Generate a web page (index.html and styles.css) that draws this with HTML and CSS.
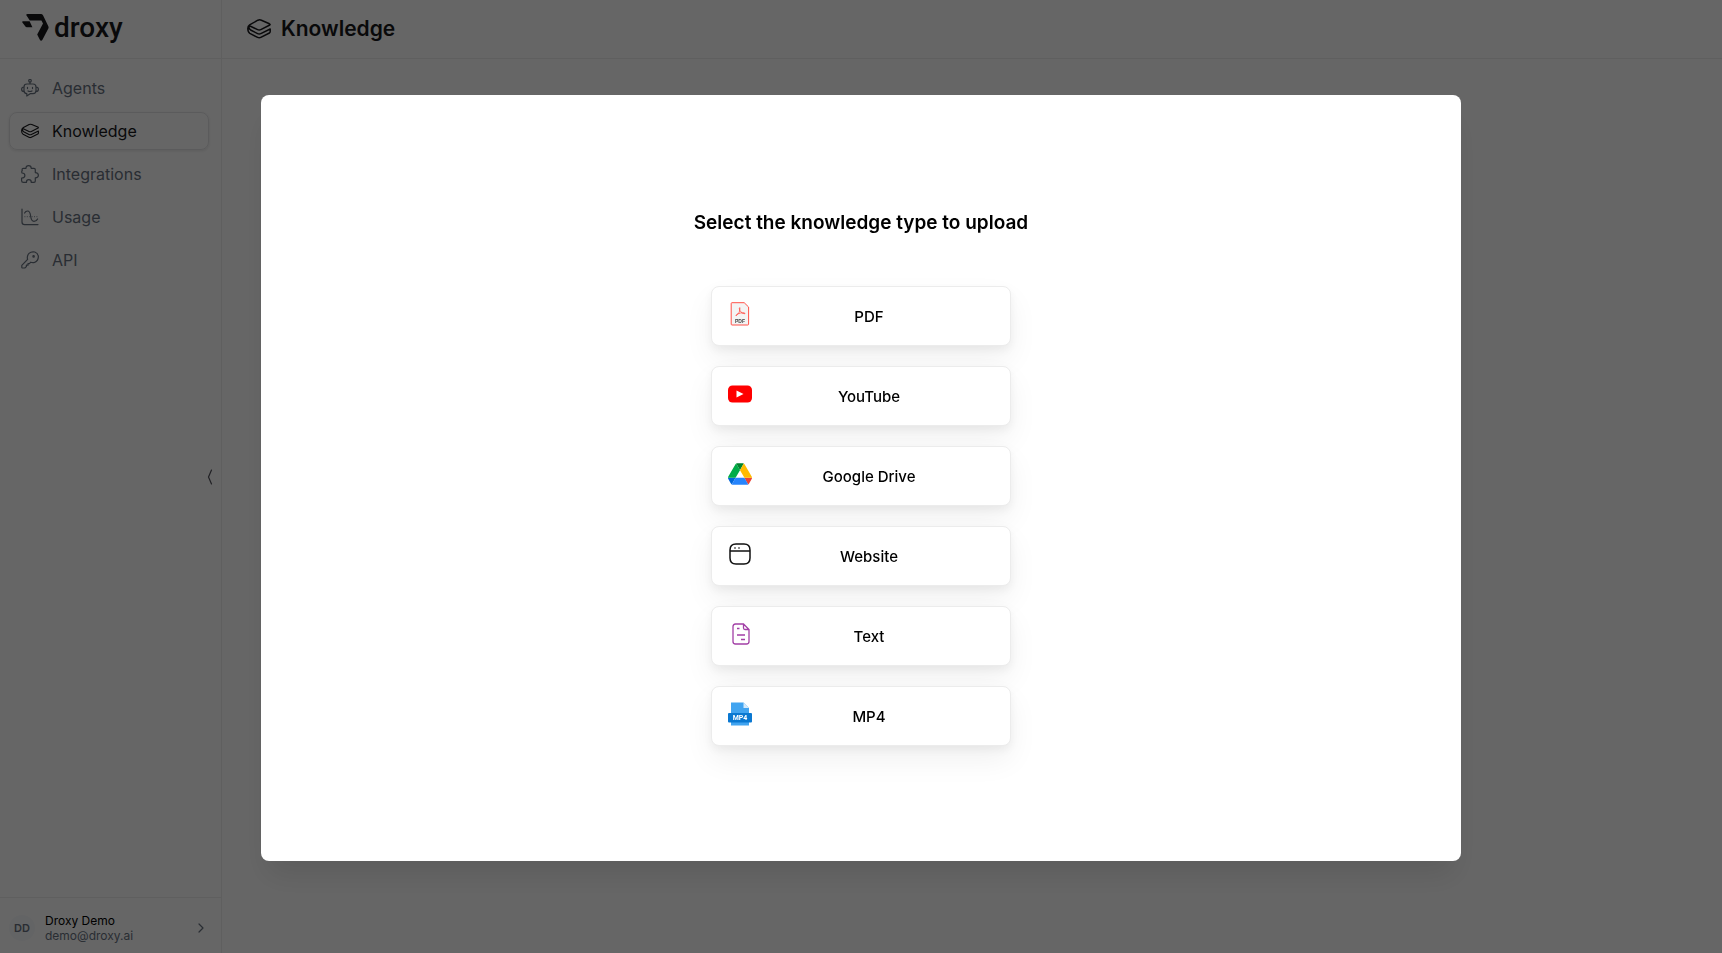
FILE: index.html
```html
<!DOCTYPE html>
<html lang="en">
<head>
  <meta charset="UTF-8" />
  <meta name="viewport" content="width=device-width, initial-scale=1.0" />
  <title>Droxy - Knowledge</title>
  <link rel="stylesheet" href="styles.css">
</head>
<body>

  <!-- shared icon -->
  <svg class="sprite" aria-hidden="true">
    <symbol id="icon-layers" viewBox="0 0 24 20">
      <path d="M22.8 6 Q23.6 5.4 22.4 4.8 L14.4 1.2 Q12.6 .5 10.9 1.2 L2.6 5.8 Q.8 7 .8 9.6 Q.8 13.2 2.8 14.4 L10.6 18.4 Q12.2 19.2 13.8 18.4 L22.4 14 Q23.2 13.6 23.2 12.6 V10 L13.8 14.6 Q12.2 15.4 10.6 14.6 L3.6 11 Q1 9.2 2.4 6.8 L10.6 10.6 Q12.2 11.4 13.8 10.6 Z"/>
    </symbol>
  </svg>

  <div class="app">
    <aside class="sidebar">
      <a class="logo" href="#">
        <svg class="logo-mark" viewBox="0 0 27 27" aria-hidden="true">
          <path d="M5.5 0 H19 Q20.2 0 21 1.3 L26.2 12 Q27 13.4 26.2 14.8 L20.6 25.6 Q19 28 17.7 25.6 L15.2 20.5 L21 9.4 L19.4 6.4 H7.8 L4.2 .9 Q4.3 0 5.5 0 Z"/>
          <path d="M1 7.2 H7.6 L10.4 13.2 H5 Q3.8 13.2 3.2 12.2 L.2 8.2 Q0 7.2 1 7.2 Z"/>
        </svg>
        <span>droxy</span>
      </a>

      <nav class="nav">
        <a class="nav-item" href="#">
          <svg class="icon" viewBox="0 0 18 18" aria-hidden="true">
            <circle cx="9" cy="1.8" r="1.3"/>
            <path d="M9 3.2 V5 M6 5 H12 Q15 5 15 8 V11.5 Q15 14.6 12 14.6 H9.5 L5.8 17 V14.6 Q3 14.4 3 11.5 V8 Q3 5 6 5 Z M3 8 Q.6 8 .6 10.3 Q.6 12.6 3 12.6 M15 8 Q17.4 8 17.4 10.3 Q17.4 12.6 15 12.6 M6.5 8.3 V9.6 M11.5 8.3 V9.6 M7 12 Q9 13 11 12"/>
          </svg>
          Agents
        </a>
        <a class="nav-item active" href="#">
          <svg class="icon" viewBox="0 0 24 20" aria-hidden="true"><use href="#icon-layers"/></svg>
          Knowledge
        </a>
        <a class="nav-item" href="#">
          <svg class="icon" viewBox="0 0 18 18" aria-hidden="true">
            <path d="M1.3 5.2 Q.6 3.3 2.6 3.3 H5 Q5 .6 7.6 .6 Q10.2 .6 10.2 3.3 H13 Q14.3 3.3 14.3 4.8 V7.6 Q17.4 7.8 17.4 10.3 Q17.4 12.8 14.3 12.8 V16 Q14.3 17.4 13 17.4 H10.3 Q10.3 14.7 7.8 14.7 Q5.4 14.7 5.4 17.4 H2.4 Q.6 17.4 .6 15.8 V13 Q3.9 13 3.9 10.5 Q3.9 8 1 8 Q.4 6.5 1.3 5.2 Z"/>
          </svg>
          Integrations
        </a>
        <a class="nav-item" href="#">
          <svg class="icon" viewBox="0 0 18 18" aria-hidden="true">
            <path d="M1 1 V14 Q1 16.6 3.6 16.6 H17 M3.6 5 Q4.6 3 6.6 3 Q9 3 9.6 8 Q10.4 13.4 13 13.4 Q15.4 13.4 16.6 11"/>
            <path d="M3.4 8.7 H17" stroke-width=".8" stroke-linecap="butt" stroke-dasharray="1 1.4"/>
          </svg>
          Usage
        </a>
        <a class="nav-item" href="#">
          <svg class="icon" viewBox="0 0 18 18" aria-hidden="true">
            <path d="M6.6 8.4 Q5.6 5 8 2.4 Q10.4 .2 13.8 1 Q17 2.2 17.4 5.6 Q17.2 10 13.6 11.4 Q11.4 11.8 9.8 11.2 L8.4 12.6 H7 V14.2 H5.4 V15.6 L3.8 17 H1.6 Q.8 17 .8 16.2 V14.4 Z"/>
            <circle cx="12.6" cy="5.4" r=".7"/>
          </svg>
          API
        </a>
      </nav>

      <button class="collapse" type="button" aria-label="Collapse sidebar">
        <svg viewBox="0 0 6 16" aria-hidden="true"><path d="M4.5 1 L1.5 8 L4.5 15"/></svg>
      </button>

      <button class="account" type="button">
        <span class="avatar">DD</span>
        <span class="account-text">
          <span class="account-name">Droxy Demo</span>
          <span class="account-email">demo@droxy.ai</span>
        </span>
        <svg class="chevron" viewBox="0 0 6 10" aria-hidden="true"><path d="M1 1 L5 5 L1 9"/></svg>
      </button>
    </aside>

    <main class="main">
      <header class="topbar">
        <svg class="topbar-icon" viewBox="0 0 24 20" aria-hidden="true"><use href="#icon-layers"/></svg>
        <h1>Knowledge</h1>
      </header>
      <div class="canvas"></div>
    </main>
  </div>

  <div class="overlay">
    <div class="modal" role="dialog" aria-modal="true" aria-labelledby="modalTitle">
      <h2 id="modalTitle">Select the knowledge type to upload</h2>

      <div class="type-list">
        <button class="type" type="button">
          <svg class="type-icon" viewBox="0 0 24 24" aria-hidden="true">
            <path d="M4 .7 H16.2 L20.6 5 V22.2 Q20.6 23 19.8 23 H4 Q3.2 23 3.2 22.2 V1.5 Q3.2 .7 4 .7 Z" fill="#f4f4f4" stroke="#ff5148"/>
            <path d="M8 14 Q12.6 10.5 12 5.6 Q10.4 5.4 12 8.6 Q13.6 12 17 11.8 Q17.2 10.2 12.6 11 Q8 12 7.8 13.6" fill="none" stroke="#ff5148" stroke-width=".8"/>
            <text x="12" y="20.6" text-anchor="middle" class="pdf-label">PDF</text>
          </svg>
          <span>PDF</span>
        </button>

        <button class="type" type="button">
          <svg class="type-icon" viewBox="0 0 24 24" aria-hidden="true">
            <rect y="3.5" width="24" height="17" rx="4.5" fill="#f00"/>
            <path d="M8.5 8.5 L15.5 12 L8.5 15.5 Z" fill="#fff"/>
          </svg>
          <span>YouTube</span>
        </button>

        <button class="type" type="button">
          <svg class="type-icon" viewBox="0 0 87.3 78" aria-hidden="true">
            <path d="m6.6 66.85 3.85 6.65c.8 1.4 1.95 2.5 3.3 3.3l13.75-23.8h-27.5c0 1.55.4 3.1 1.2 4.5z" fill="#0066da"/>
            <path d="m43.65 25-13.75-23.8c-1.35.8-2.5 1.9-3.3 3.3l-25.4 44a9.06 9.06 0 0 0-1.2 4.5h27.5z" fill="#00ac47"/>
            <path d="m73.55 76.8c1.35-.8 2.5-1.9 3.3-3.3l1.6-2.75 7.65-13.25c.8-1.4 1.2-2.95 1.2-4.5h-27.5l5.85 11.5z" fill="#ea4335"/>
            <path d="m43.65 25 13.75-23.8c-1.35-.8-2.9-1.2-4.5-1.2h-18.5c-1.6 0-3.15.45-4.5 1.2z" fill="#00832d"/>
            <path d="m59.8 53h-32.3l-13.75 23.8c1.35.8 2.9 1.2 4.5 1.2h50.8c1.6 0 3.15-.45 4.5-1.2z" fill="#2684fc"/>
            <path d="m73.4 26.5-12.7-22c-.8-1.4-1.95-2.5-3.3-3.3l-13.75 23.8 16.15 28h27.45c0-1.55-.4-3.1-1.2-4.5z" fill="#ffba00"/>
          </svg>
          <span>Google Drive</span>
        </button>

        <button class="type" type="button">
          <svg class="type-icon" viewBox="0 0 24 24" aria-hidden="true">
            <path d="M8 2 H16 Q22 2 22 8 V16 Q22 22 16 22 H8 Q2 22 2 16 V8 Q2 2 8 2 Z M2 9 H22" fill="none" stroke="#111" stroke-width="1.5"/>
            <path d="M6.2 6 H7.8 M10.2 6 H11.8" stroke="#444" stroke-width="1.4"/>
          </svg>
          <span>Website</span>
        </button>

        <button class="type" type="button">
          <svg class="type-icon" viewBox="0 0 24 24" aria-hidden="true">
            <path d="M7.5 2 H15.5 L21 7.5 V19.5 Q21 22 18.5 22 H7.5 Q5 22 5 19.5 V4.5 Q5 2 7.5 2 Z M15.5 2 V6 Q15.5 7.5 17 7.5 H21 M9 6.5 H11.5 M9 13 H17 M13 17.5 H17" fill="none" stroke="#a23fa6" stroke-width="1.3"/>
          </svg>
          <span>Text</span>
        </button>

        <button class="type" type="button">
          <svg class="type-icon" viewBox="0 0 24 24" aria-hidden="true">
            <path d="M3 .4 H15.5 L21 6 V23.6 H3 Z" fill="#41a4f0"/>
            <path d="M15.5 .4 L21 6 H15.5 Z" fill="#d3e9fb"/>
            <rect y="11" width="24" height="9.5" rx="1" fill="#0a78d1"/>
            <text x="12" y="18.4" text-anchor="middle" class="mp4-label">MP4</text>
          </svg>
          <span>MP4</span>
        </button>
      </div>
    </div>
  </div>

</body>
</html>
```
FILE: styles.css
```css
:root {
  --text-color: #18181b;
  --muted-color: #68727f;
  --border-color: #eeeeee;
}

* {
  margin: 0;
  padding: 0;
  box-sizing: border-box;
}

body {
  font-family: Inter, sans-serif;
  color: var(--text-color);
  background: #fff;
}

a {
  color: inherit;
  text-decoration: none;
}

button {
  font: inherit;
  color: inherit;
  background: none;
  border: none;
  cursor: pointer;
}

.sprite {
  position: absolute;
  width: 0;
  height: 0;
}

.app {
  display: flex;
  min-height: 100vh;
}

/* Sidebar */
.sidebar {
  position: relative;
  display: flex;
  flex-direction: column;
  width: 222px;
  flex-shrink: 0;
  border-right: 1px solid var(--border-color);
}

.logo {
  display: flex;
  align-items: center;
  gap: 5px;
  height: 59px;
  padding: 0 0 3px 22px;
  border-bottom: 1px solid var(--border-color);
  font-family: Roboto, sans-serif;
  font-size: 28px;
  font-weight: 500;
}

.logo-mark {
  width: 27px;
  height: 27px;
  fill: var(--text-color);
}

.nav {
  display: flex;
  flex-direction: column;
  flex: 1;
  gap: 5px;
  padding: 10px 12px 10px 9px;
}

.nav-item {
  display: flex;
  align-items: center;
  gap: 13px;
  height: 38px;
  padding: 0 11px;
  border: 1px solid transparent;
  border-radius: 8px;
  color: var(--muted-color);
}

.nav-item.active {
  color: var(--text-color);
  border-color: #e4e4e7;
  box-shadow: 0 1px 3px rgba(0, 0, 0, 0.1);
}

.icon {
  width: 18px;
  height: 18px;
}

.icon,
.topbar-icon,
.collapse svg,
.chevron {
  fill: none;
  stroke: currentColor;
  stroke-width: 1.2;
  stroke-linecap: round;
  stroke-linejoin: round;
}

.active .icon,
.topbar-icon {
  stroke-width: 1.5;
}

/* sits over the sidebar edge */
.collapse {
  position: absolute;
  top: 50%;
  right: 8px;
  transform: translateY(-50%);
  color: #52525b;
}

.collapse svg {
  display: block;
  width: 6px;
  height: 16px;
}

.account {
  display: flex;
  align-items: center;
  height: 56px;
  padding: 4px 17px 0 9px;
  border-top: 1px solid var(--border-color);
  text-align: left;
}

.avatar {
  width: 26px;
  height: 26px;
  border-radius: 50%;
  background: #f8fafc;
  color: var(--muted-color);
  font-size: 11px;
  font-weight: 600;
  line-height: 26px;
  text-align: center;
}

.account-text {
  display: flex;
  flex-direction: column;
  flex: 1;
  margin-left: 10px;
  font-size: 12px;
  line-height: 15px;
}

.account-name {
  color: #000;
}

.account-email {
  color: var(--muted-color);
}

.chevron {
  width: 6px;
  height: 10px;
  color: var(--muted-color);
}

/* Main */
.main {
  display: flex;
  flex-direction: column;
  flex: 1;
}

.topbar {
  display: flex;
  align-items: center;
  gap: 10px;
  height: 59px;
  padding: 0 25px 1px;
  border-bottom: 1px solid var(--border-color);
}

.topbar-icon {
  width: 24px;
  height: 20px;
}

.topbar h1 {
  font-size: 21px;
  font-weight: 600;
}

.canvas {
  flex: 1;
}

/* Modal */
.overlay {
  position: fixed;
  inset: 0;
  display: flex;
  align-items: center;
  justify-content: center;
  padding-top: 3px;
  background: rgba(0, 0, 0, 0.6);
}

.modal {
  display: flex;
  flex-direction: column;
  align-items: center;
  gap: 49px;
  width: 1200px;
  max-width: 90%;
  padding: 114px 20px 115px;
  border-radius: 8px;
  background: #fff;
  box-shadow: 0 20px 30px -6px rgba(0, 0, 0, 0.1);
}

.modal h2 {
  color: #000;
  font-size: 19px;
  font-weight: 600;
  line-height: 28px;
}

.type-list {
  display: flex;
  flex-direction: column;
  gap: 20px;
  width: 300px;
}

.type {
  display: flex;
  align-items: center;
  height: 60px;
  padding: 0 16px;
  border: 1px solid #ececec;
  border-radius: 8px;
  background: #fff;
  box-shadow: 0 14px 30px rgba(0, 0, 0, 0.06), 0 4px 8px rgba(0, 0, 0, 0.05);
  color: #000;
  font-size: 15px;
  font-weight: 500;
}

.type span {
  flex: 1;
  padding-right: 8px;
  text-align: center;
}

.type-icon {
  width: 24px;
  height: 24px;
  margin-bottom: 4px;
}

.pdf-label {
  font: 700 5px "Liberation Sans", sans-serif;
  fill: #444;
}

.mp4-label {
  font: 700 7px Roboto, sans-serif;
  fill: #fff;
}
```
